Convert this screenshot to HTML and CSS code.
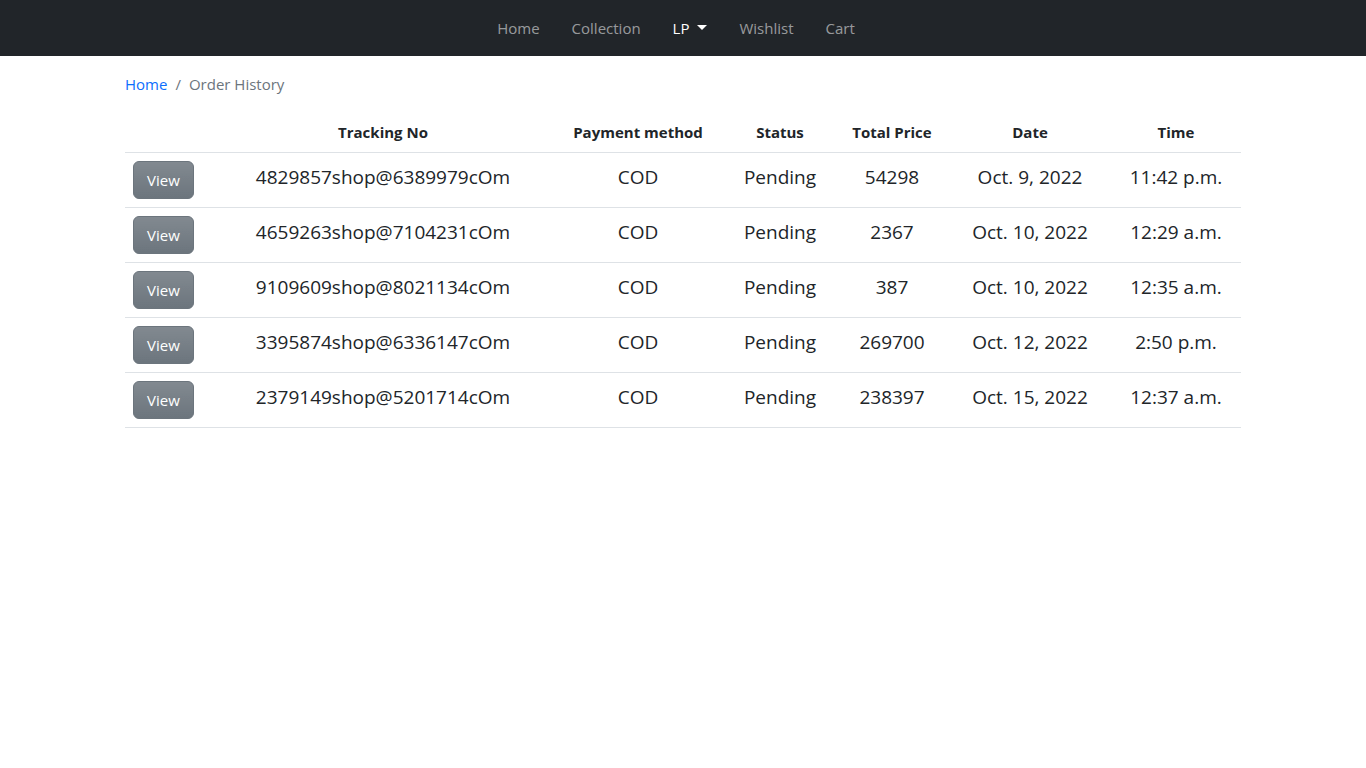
FILE: index.html
```html
<!DOCTYPE html>
<html lang="en">
<head>
<meta charset="utf-8">
<title>Order History</title>
<link rel="stylesheet" href="styles.css">
</head>
<body>
<nav class="navbar">
  <ul class="nav">
    <li><a class="nav-link" href="#">Home</a></li>
    <li><a class="nav-link" href="#">Collection</a></li>
    <li><a class="nav-link active dropdown" href="#">LP<span class="caret"></span></a></li>
    <li><a class="nav-link" href="#">Wishlist</a></li>
    <li><a class="nav-link" href="#">Cart</a></li>
  </ul>
</nav>
<main class="container">
  <ol class="breadcrumb">
    <li><a href="#">Home</a></li>
    <li class="sep">/</li>
    <li class="current">Order History</li>
  </ol>
  <table class="table">
    <colgroup>
      <col class="c1"><col class="c2"><col class="c3"><col class="c4"><col class="c5"><col class="c6"><col class="c7">
    </colgroup>
    <thead>
      <tr><th></th><th>Tracking No</th><th>Payment method</th><th>Status</th><th>Total Price</th><th>Date</th><th>Time</th></tr>
    </thead>
    <tbody>
      <tr><td><a class="btn" href="#">View</a></td><td>4829857shop@6389979cOm</td><td>COD</td><td>Pending</td><td>54298</td><td>Oct. 9, 2022</td><td>11:42 p.m.</td></tr>
      <tr><td><a class="btn" href="#">View</a></td><td>4659263shop@7104231cOm</td><td>COD</td><td>Pending</td><td>2367</td><td>Oct. 10, 2022</td><td>12:29 a.m.</td></tr>
      <tr><td><a class="btn" href="#">View</a></td><td>9109609shop@8021134cOm</td><td>COD</td><td>Pending</td><td>387</td><td>Oct. 10, 2022</td><td>12:35 a.m.</td></tr>
      <tr><td><a class="btn" href="#">View</a></td><td>3395874shop@6336147cOm</td><td>COD</td><td>Pending</td><td>269700</td><td>Oct. 12, 2022</td><td>2:50 p.m.</td></tr>
      <tr><td><a class="btn" href="#">View</a></td><td>2379149shop@5201714cOm</td><td>COD</td><td>Pending</td><td>238397</td><td>Oct. 15, 2022</td><td>12:37 a.m.</td></tr>
    </tbody>
  </table>
</main>
</body>
</html>
```
FILE: styles.css
```css
* { box-sizing: border-box; }
body {
  margin: 0;
  font-family: "Segoe UI", "Open Sans", "Noto Sans", "Liberation Sans", sans-serif;
  font-size: 15px;
  line-height: 24px;
  color: #212529;
  background: #fff;
}
.navbar {
  height: 56px;
  background: #212529;
  display: flex;
  justify-content: center;
  align-items: center;
}
.nav {
  list-style: none;
  margin: 0 14px 0 0;
  padding: 0;
  display: flex;
}
.nav-link {
  display: flex;
  align-items: center;
  padding: 8px 16px;
  color: rgba(255,255,255,.55);
  text-decoration: none;
}
.nav-link.active { color: #fff; }
.caret {
  display: inline-block;
  margin-left: 8px;
  width: 0;
  height: 0;
  border-top: 5px solid #fff;
  border-left: 5px solid transparent;
  border-right: 5px solid transparent;
  position: relative;
  top: -1px;
}
.container {
  max-width: 1140px;
  margin: 0 auto;
  padding: 16px 12px 0;
}
.breadcrumb {
  list-style: none;
  margin: 0 0 16px;
  padding: 0;
  display: flex;
  color: #6c757d;
}
.breadcrumb a { color: #0d6efd; text-decoration: none; }
.breadcrumb .sep { padding: 0 8px; }
.table {
  width: 100%;
  border-collapse: collapse;
  table-layout: fixed;
  text-align: center;
}
.c1 { width: 90px; }
.c2 { width: 336px; }
.c3 { width: 174px; }
.c4 { width: 110px; }
.c5 { width: 114px; }
.c6 { width: 162px; }
.c7 { width: 130px; }
.table th, .table td {
  padding: 8px;
  border-bottom: 1px solid #dee2e6;
  vertical-align: baseline;
}
.table th { font-weight: 700; }
.table td { font-size: 19px; line-height: 30px; }
.table td:first-child { text-align: left; font-size: 15px; line-height: 24px; }
.btn {
  display: inline-block;
  vertical-align: -2px;
  padding: 6px 13px;
  font-size: 15px;
  line-height: 24px;
  color: #fff;
  text-decoration: none;
  border: 1px solid #6c757d;
  border-radius: 6px;
  background: #6c757d linear-gradient(180deg, rgba(255,255,255,.15), rgba(255,255,255,0));
}
```
